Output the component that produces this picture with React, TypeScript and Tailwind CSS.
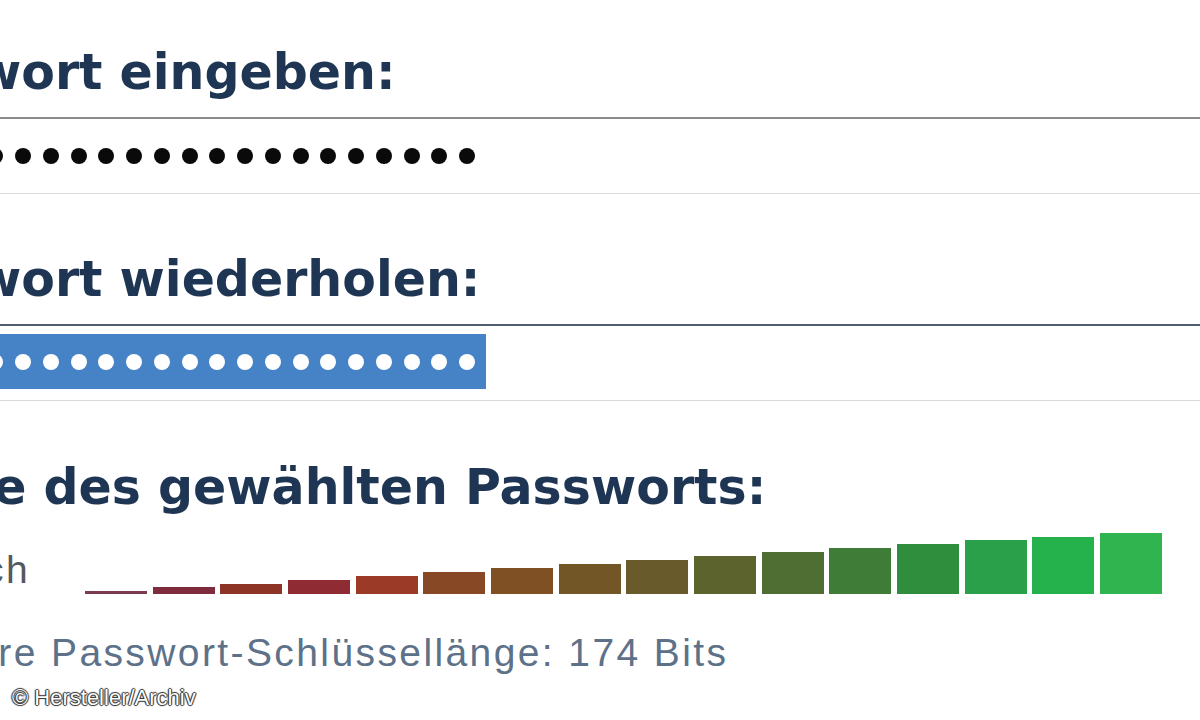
import React from 'react';

const bars = [
  { h: 3, c: '#7b3a4e' },
  { h: 7, c: '#7e2b3d' },
  { h: 10, c: '#8e3427' },
  { h: 14, c: '#8f2c33' },
  { h: 18, c: '#9b3b27' },
  { h: 22, c: '#874826' },
  { h: 26, c: '#7f5024' },
  { h: 30, c: '#735626' },
  { h: 34, c: '#685a2a' },
  { h: 38, c: '#5c632d' },
  { h: 42, c: '#4f6e34' },
  { h: 46, c: '#3f7c38' },
  { h: 50, c: '#2e8e3e' },
  { h: 54, c: '#2aa04a' },
  { h: 57, c: '#25b24c' },
  { h: 61, c: '#2fb450' },
];

const dots = Array.from({ length: 18 });

function Heading({ children }: { children: React.ReactNode }) {
  return (
    <div className="h-[49px] whitespace-nowrap text-[49px] leading-[49px] font-bold text-[#1e3553] ml-[-150px] font-['DejaVu_Sans',sans-serif]">
      {children}
    </div>
  );
}

export default function App() {
  return (
    <div className="relative w-[1200px] h-[720px] overflow-hidden bg-white font-['Liberation_Sans',Arial,sans-serif]">
      <div className="flex flex-col pt-[48px]">
        <Heading>Passwort eingeben:</Heading>

        <div className="mt-[20px] h-[77px] border-t-2 border-[#8c8c8c] border-b border-b-[#d9dcdc] bg-white flex items-center">
          <div className="flex items-center gap-[11.75px] ml-[-12.75px]">
            {dots.map((_, i) => (
              <span key={i} className="w-[16px] h-[16px] rounded-full bg-[#0a0a0a]" />
            ))}
          </div>
        </div>

        <div className="mt-[61px]">
          <Heading>Passwort wiederholen:</Heading>
        </div>

        <div className="mt-[20px] h-[77px] border-t-2 border-[#4f5f6e] border-b border-b-[#d5dbdc] bg-white pt-[8px]">
          <div className="w-[486px] h-[55px] bg-[#4682c6] flex items-center">
            <div className="flex items-center gap-[11.75px] ml-[-12.75px]">
              {dots.map((_, i) => (
                <span key={i} className="w-[16px] h-[16px] rounded-full bg-white" />
              ))}
            </div>
          </div>
        </div>

        <div className="mt-[62px]">
          <div className="h-[49px] whitespace-nowrap text-[49px] leading-[49px] font-bold text-[#1e3553] ml-[-154px] font-['DejaVu_Sans',sans-serif]">
            Stärke des gewählten Passworts:
          </div>
        </div>

        <div className="mt-[12px] flex items-end h-[70px]">
          <div className="w-[85px] shrink-0 overflow-hidden">
            <span className="block mb-[5px] ml-[-145px] whitespace-nowrap text-[39px] leading-none tracking-[2.4px] text-[#53595f]">
              Schwach
            </span>
          </div>
          <div className="flex items-end gap-[5.67px]">
            {bars.map((b, i) => (
              <div key={i} className="w-[62px]" style={{ height: b.h, backgroundColor: b.c }} />
            ))}
          </div>
        </div>

        <div className="mt-[39px] h-[39px] ml-[-166px] whitespace-nowrap text-[39px] leading-none tracking-[2.4px] text-[#5d7189]">
          Ungefähre Passwort-Schlüssellänge: 174 Bits
        </div>
      </div>

      <div className="absolute left-[12px] top-[687px] text-[22px] leading-none text-white whitespace-nowrap [text-shadow:0_0_1px_#222,1px_0_1px_#333,-1px_0_1px_#333,0_1px_1px_#333,0_-1px_1px_#333]">
        © Hersteller/Archiv
      </div>
    </div>
  );
}
